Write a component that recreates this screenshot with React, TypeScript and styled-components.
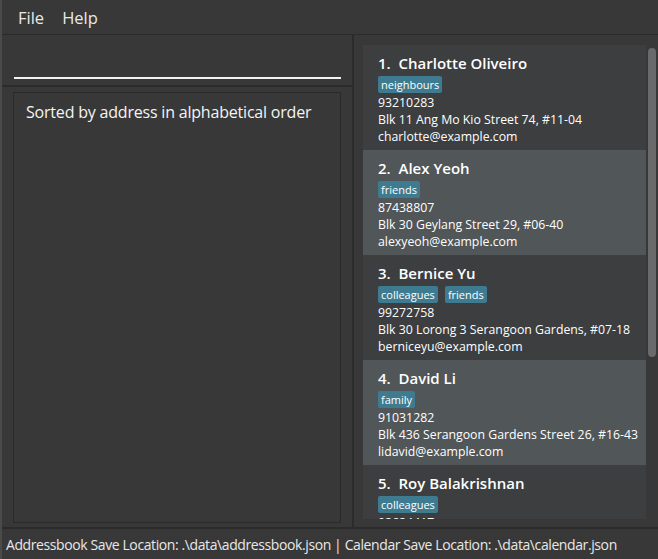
import { createGlobalStyle, styled } from "styled-components";

const GlobalStyle = createGlobalStyle`
  html, body {
    margin: 0;
    padding: 0;
    background: #383838;
  }
  #root {
    height: 100vh;
  }
`;

const Window = styled.div`
  height: 559px;
  display: flex;
  flex-direction: column;
  background: #383838;
  border-left: 2px solid #4a4a4a;
  box-sizing: border-box;
  font-family: "Open Sans", "Noto Sans", sans-serif;
  color: #ffffff;
  overflow: hidden;
`;

const MenuBar = styled.div`
  height: 34px;
  display: flex;
  align-items: center;
  gap: 18px;
  padding-left: 16px;
  border-bottom: 1px solid #2b2b2b;
  flex-shrink: 0;
`;

const MenuItem = styled.span`
  font-size: 16.5px;
  color: #e8e8e8;
`;

const Main = styled.div`
  flex: 1;
  display: flex;
  min-height: 0;
  min-width: 0;
`;

const LeftPane = styled.div`
  width: 350px;
  display: flex;
  flex-direction: column;
  border-right: 2px solid #2b2b2b;
  flex-shrink: 0;
`;

const CommandBox = styled.div`
  height: 50px;
  padding: 0 11px 0 12px;
  display: flex;
  align-items: flex-end;
  border-bottom: 2px solid #2b2b2b;
`;

const CommandInput = styled.div`
  width: 100%;
  height: 2px;
  margin-bottom: 6px;
  background: #f2f2f2;
`;

const ResultPane = styled.div`
  flex: 1;
  padding: 5px 11px 4px 11px;
  display: flex;
`;

const ResultBox = styled.div`
  flex: 1;
  border: 1px solid #2a2a2a;
  padding: 8px 12px;
  font-size: 16px;
  letter-spacing: -0.2px;
  color: #f4f4f4;
  white-space: nowrap;
`;

const RightPane = styled.div`
  flex: 1;
  min-width: 0;
  position: relative;
  padding: 10px 12px 8px 9px;
  display: flex;
  flex-direction: column;
`;

const List = styled.div`
  flex: 1;
  min-width: 0;
  overflow: hidden;
  display: flex;
  flex-direction: column;
`;

const Card = styled.div<{ $even: boolean }>`
  height: 105px;
  flex-shrink: 0;
  box-sizing: border-box;
  padding: 8px 15px 0 15px;
  background: ${(p) => (p.$even ? "#515658" : "#3c3e3f")};
`;

const Name = styled.div`
  font-size: 15px;
  font-weight: 600;
  line-height: 20px;
  white-space: nowrap;
`;

const TagRow = styled.div`
  display: flex;
  gap: 7px;
  margin: 3px 0 1px;
`;

const Tag = styled.span`
  background: #3e7b91;
  color: #ffffff;
  font-size: 11px;
  line-height: 17px;
  padding: 0 3px;
  border-radius: 2px;
`;

const Detail = styled.div`
  font-size: 12.3px;
  line-height: 17px;
  white-space: nowrap;
`;

const ScrollThumb = styled.div`
  position: absolute;
  right: 2px;
  top: 13px;
  width: 8px;
  height: 309px;
  background: #6a6a6a;
  border-radius: 4px;
`;

const StatusBar = styled.div`
  height: 30px;
  flex-shrink: 0;
  border-top: 2px solid #2b2b2b;
  display: flex;
  align-items: center;
  padding-left: 4px;
  font-size: 14px;
  letter-spacing: -0.4px;
  color: #e8e8e8;
  white-space: nowrap;
  overflow: hidden;
`;

const persons = [
  { name: "Charlotte Oliveiro", tags: ["neighbours"], phone: "93210283", address: "Blk 11 Ang Mo Kio Street 74, #11-04", email: "charlotte@example.com" },
  { name: "Alex Yeoh", tags: ["friends"], phone: "87438807", address: "Blk 30 Geylang Street 29, #06-40", email: "alexyeoh@example.com" },
  { name: "Bernice Yu", tags: ["colleagues", "friends"], phone: "99272758", address: "Blk 30 Lorong 3 Serangoon Gardens, #07-18", email: "berniceyu@example.com" },
  { name: "David Li", tags: ["family"], phone: "91031282", address: "Blk 436 Serangoon Gardens Street 26, #16-43", email: "lidavid@example.com" },
  { name: "Roy Balakrishnan", tags: ["colleagues"], phone: "92624417", address: "Blk 45 Aljunied Street 85, #11-31", email: "royb@example.com" },
];

export default function App() {
  return (
    <>
      <GlobalStyle />
      <Window>
        <MenuBar>
          <MenuItem>File</MenuItem>
          <MenuItem>Help</MenuItem>
        </MenuBar>
        <Main>
          <LeftPane>
            <CommandBox>
              <CommandInput />
            </CommandBox>
            <ResultPane>
              <ResultBox>Sorted by address in alphabetical order</ResultBox>
            </ResultPane>
          </LeftPane>
          <RightPane>
            <List>
              {persons.map((p, i) => (
                <Card key={p.name} $even={i % 2 === 1}>
                  <Name>{i + 1}.&nbsp;&nbsp;{p.name}</Name>
                  <TagRow>
                    {p.tags.map((t) => (
                      <Tag key={t}>{t}</Tag>
                    ))}
                  </TagRow>
                  <Detail>{p.phone}</Detail>
                  <Detail>{p.address}</Detail>
                  <Detail>{p.email}</Detail>
                </Card>
              ))}
            </List>
            <ScrollThumb />
          </RightPane>
        </Main>
        <StatusBar>
          Addressbook Save Location: .\data\addressbook.json | Calendar Save Location: .\data\calendar.json
        </StatusBar>
      </Window>
    </>
  );
}
